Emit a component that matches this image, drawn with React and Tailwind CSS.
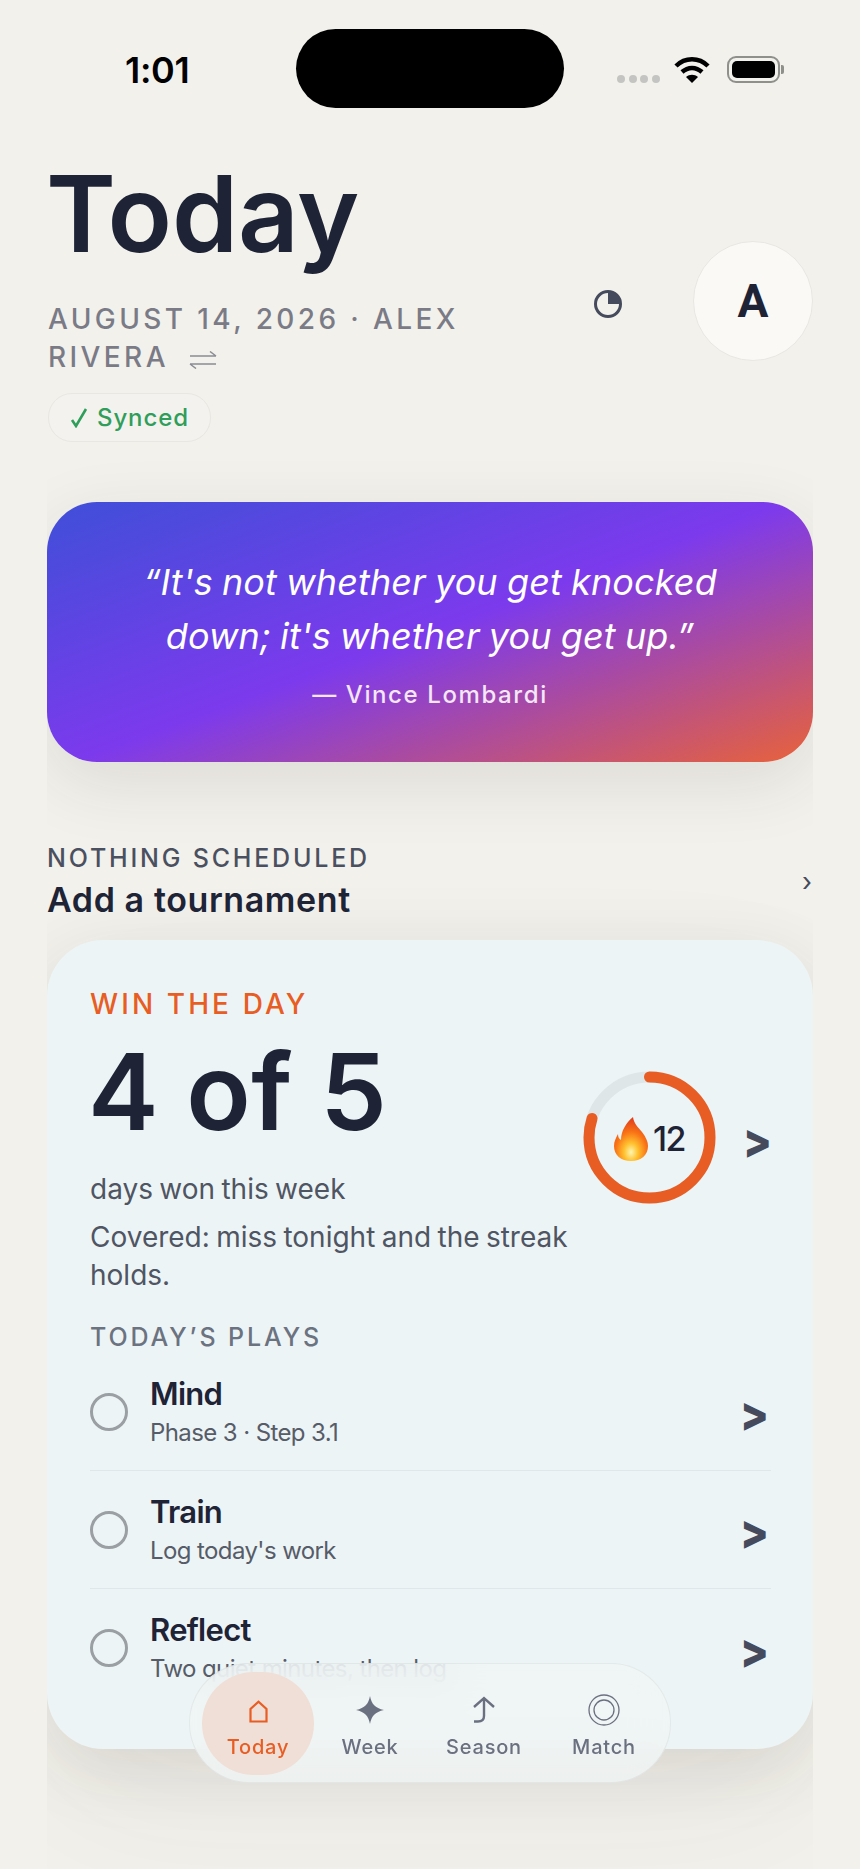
import React from 'react';

const display = "font-['Inter','Liberation_Sans',sans-serif]";

function Chevron() {
    return <span className={`${display} inline-block scale-x-[0.88] text-[48px] leading-[43px] font-extrabold text-[#454a5c]`}>&gt;</span>;
}

function Flame() {
    return (
        <svg width="34" height="44" viewBox="0 0 34 44" className="shrink-0">
            <defs>
                <radialGradient id="flame" cx="50%" cy="80%" r="75%">
                    <stop offset="0%" stopColor="#fff6b0" />
                    <stop offset="28%" stopColor="#ffc02e" />
                    <stop offset="62%" stopColor="#f97316" />
                    <stop offset="100%" stopColor="#e2401c" />
                </radialGradient>
            </defs>
            <path d="M19 0c1 7 5 10 9 15 4 5 6 10 6 14 0 9-7 15-17 15S0 38 0 29c0-5 2-8 4-12 0 3 1 5 3 6 0-9 5-17 12-23z" fill="url(#flame)" />
        </svg>
    );
}

function PlayRow({ title, sub, divider }) {
    return (
        <div className={`flex items-center h-[118px] ${divider ? 'border-b border-[#dfe7ea]' : ''}`}>
            <div className="w-[38px] h-[38px] rounded-full border-[3.5px] border-[#9a9fa3] shrink-0"></div>
            <div className="ml-[22px] flex-1">
                <div className={`${display} text-[31px] leading-[40px] font-semibold tracking-[-0.7px] text-[#1e2336]`}>{title}</div>
                <div className="text-[24px] leading-[34px] mt-[2px] tracking-[-0.6px] text-[#565c68]">{sub}</div>
            </div>
            <div className="mt-[6px]"><Chevron /></div>
        </div>
    );
}

function NavTab({ label, width, active, children }) {
    return (
        <div className={`${width} h-[103px] flex flex-col items-center rounded-full ${active ? 'bg-[#f0dfd6] text-[#e85d23]' : 'text-[#6b7080]'}`}>
            <div className="h-[36px] mt-[20px] flex items-center justify-center">{children}</div>
            <div className={`${display} text-[20px] leading-[26px] mt-[6px] font-medium tracking-[0.8px]`}>{label}</div>
        </div>
    );
}

export default function App() {
    return (
        <div className="relative w-[860px] h-[1869px] overflow-hidden bg-[#f2f1ec] font-['Inter','Liberation_Sans',sans-serif]">

            {/* Status bar */}
            <div className="relative h-[140px]">
                <div className="absolute left-[125px] top-[48px] text-[36px] leading-[44px] font-semibold tracking-[-0.3px] text-black">1:01</div>
                <div className="absolute left-[296px] top-[29px] w-[268px] h-[79px] rounded-[40px] bg-black"></div>
                <div className="absolute left-[617px] top-[75px] flex gap-[3.6px]">
                    {[0, 1, 2, 3].map((i) => <div key={i} className="w-[8px] h-[8px] rounded-full bg-[#c4c4c2]"></div>)}
                </div>
                <svg className="absolute left-[674px] top-[56px]" width="36" height="27" viewBox="0 0 36 27">
                    <path d="M2 10C11 1 25 1 34 10" fill="none" stroke="#000" strokeWidth="4.5" />
                    <path d="M8 16c6-5.500 14-5.500 20 0" fill="none" stroke="#000" strokeWidth="4.5" />
                    <path d="M12 21c3.500-3 8.500-3 12 0l-6 6z" fill="#000" />
                </svg>
                <div className="absolute left-[727px] top-[56px] w-[53px] h-[27px] rounded-[9px] border-[2px] border-[#8f8f8c] p-[3px]">
                    <div className="w-full h-full rounded-[5px] bg-black"></div>
                </div>
                <div className="absolute left-[781px] top-[65px] w-[3px] h-[9px] rounded-r-[2px] bg-[#8f8f8c]"></div>
            </div>

            {/* Header */}
            <div className="flex justify-between pl-[48px] pr-[47px]">
                <div className="w-[480px]">
                    <h1 className={`${display} ml-[-2px] mt-[6px] text-[106px] leading-[136px] font-semibold tracking-[-0.1px] text-[#1e2336]`}>Today</h1>
                    <div className={`${display} mt-[18px] text-[28px] leading-[38px] font-medium tracking-[3.4px] text-[#7a7b86]`}>
                        AUGUST 14, 2026 · ALEX RIVERA
                        <svg className="inline-block ml-[20px] align-[-2px]" width="28" height="18" viewBox="0 0 28 18" fill="none" stroke="#8b8c94" strokeWidth="1.5">
                            <path d="M1 5h26M21 0.500l6 4.500M27 13H1M7 17.500L1 13" />
                        </svg>
                    </div>
                    <div className="mt-[17px] inline-flex items-center h-[49px] px-[21px] rounded-[24px] border border-[#e8e7e2] bg-[#f3f2ee]">
                        <svg width="18" height="20" viewBox="0 0 18 20" fill="none" stroke="#2f9e5a" strokeWidth="2.600" className="mr-[9px]">
                            <path d="M2 12l4 6L16 1" />
                        </svg>
                        <span className={`${display} text-[24px] font-medium tracking-[0.9px] text-[#2f9e5a]`}>Synced</span>
                    </div>
                </div>
                <div className="flex items-center mt-[102px] h-[118px]">
                    <svg width="30" height="30" viewBox="0 0 30 30" className="mr-[70px] mt-[6px]">
                        <circle cx="15" cy="15" r="12.500" fill="none" stroke="#454a5c" strokeWidth="3" />
                        <path d="M15 15V2.500A12.500 12.500 0 0 1 27.500 15z" fill="#454a5c" />
                    </svg>
                    <div className="w-[120px] h-[120px] rounded-full bg-[#faf9f6] border border-[#e8e7e2] flex items-center justify-center">
                        <span className="font-['Roboto',sans-serif] text-[46px] font-bold text-[#1e2336]">A</span>
                    </div>
                </div>
            </div>

            {/* Scrolling content */}
            <div className="absolute left-[47px] right-[47px] top-[448px] bottom-0 overflow-hidden pt-[54px]">
                <div className="h-[260px] rounded-[50px] bg-[linear-gradient(160deg,#3f4fd8_0%,#7c3aed_50%,#e8623a_100%)] shadow-[0_20px_70px_rgba(60,50,30,0.11)] flex flex-col items-center pt-[53px]">
                    <p className="w-[620px] text-center italic text-[36px] leading-[54px] tracking-[0.1px] [word-spacing:-1px] text-white">“It's not whether you get knocked down; it's whether you get up.”</p>
                    <p className={`${display} mt-[15px] text-[24px] leading-[34px] font-medium tracking-[1.6px] text-[#f3e6f5]`}>— Vince Lombardi</p>
                </div>

                <div className="flex items-center justify-between mt-[79px]">
                    <div>
                        <div className={`${display} text-[25px] leading-[34px] font-medium tracking-[2.8px] text-[#4b5060]`}>NOTHING SCHEDULED</div>
                        <div className={`${display} text-[34px] leading-[44px] mt-[3px] font-semibold tracking-[0.6px] text-[#1e2336]`}>Add a tournament</div>
                    </div>
                    <span className="text-[26px] leading-none text-[#454a5c] mr-[1px]">›</span>
                </div>

                <div className="mt-[18px] h-[809px] rounded-[56px] bg-[#edf4f6] shadow-[0_20px_70px_rgba(60,50,30,0.11),0_60px_160px_rgba(60,50,30,0.05)] px-[43px] pt-[45px]">
                    <div className={`${display} text-[28px] leading-[38px] font-medium tracking-[3.1px] text-[#e85d23]`}>WIN THE DAY</div>
                    <div className="flex items-start">
                        <div className="w-[485px] shrink-0">
                            <div className={`${display} ml-[-2px] mt-[8px] text-[106px] leading-[122px] font-semibold tracking-[0.5px] text-[#1e2336]`}>4 of 5</div>
                            <p className="mt-[17px] text-[28px] leading-[38px] tracking-[0px] [word-spacing:-1.5px] text-[#4f5563]">days won this week</p>
                            <p className="mt-[10px] text-[28px] leading-[38px] tracking-[0px] [word-spacing:-1.5px] text-[#4f5563]">Covered: miss tonight and the streak holds.</p>
                        </div>
                        <div className="relative w-[133px] h-[133px] mt-[48px] ml-[8px] shrink-0">
                            <svg width="133" height="133" viewBox="0 0 133 133" className="-rotate-90">
                                <circle cx="66.500" cy="66.500" r="60.500" fill="none" stroke="#dfe6e8" strokeWidth="11" />
                                <circle cx="66.500" cy="66.500" r="60.500" fill="none" stroke="#e85d23" strokeWidth="11" strokeLinecap="round" strokeDasharray="304 380.100" />
                            </svg>
                            <div className="absolute inset-0 flex items-center justify-center gap-[5px] pt-[2px]">
                                <Flame />
                                <span className="text-[34px] leading-none font-medium tracking-[-1.5px] text-[#1e2336]">12</span>
                            </div>
                        </div>
                        <div className="ml-[25px] mt-[96px]"><Chevron /></div>
                    </div>

                    <div className={`${display} mt-[26px] text-[25px] leading-[34px] font-medium tracking-[2.9px] text-[#6b7280]`}>TODAY’S PLAYS</div>
                    <div className="mt-[-1px] mr-[-1px]">
                        <PlayRow title="Mind" sub="Phase 3 · Step 3.1" divider />
                        <PlayRow title="Train" sub="Log today's work" divider />
                        <PlayRow title="Reflect" sub="Two quiet minutes, then log" />
                    </div>
                </div>
            </div>

            {/* Bottom tab bar */}
            <div className="absolute left-[189px] top-[1663px] w-[482px] h-[120px] rounded-[60px] bg-[rgba(240,245,245,0.8)] backdrop-blur-[18px] border border-[rgba(0,0,0,0.05)] flex items-center pl-[12px]">
                <NavTab label="Today" width="w-[112px]" active>
                    <svg width="19" height="23" viewBox="0 0 19 23" fill="none" stroke="currentColor" strokeWidth="2.200" className="mt-[3px]">
                        <path d="M1.500 21.500V9L9.500 1.800 17.500 9v12.500z" />
                    </svg>
                </NavTab>
                <NavTab label="Week" width="w-[112px]">
                    <svg width="28" height="28" viewBox="0 0 28 28" fill="currentColor">
                        <path d="M14 0c1.500 8 5 12 14 14-9 2-12.500 6-14 14-1.500-8-5-12-14-14 9-2 12.500-6 14-14z" />
                    </svg>
                </NavTab>
                <NavTab label="Season" width="w-[116px]">
                    <svg width="22" height="27" viewBox="0 0 22 27" fill="none" stroke="currentColor" strokeWidth="2.400">
                        <path d="M1 11L11 2l10 9M11 2v18c0 4-2 5.500-6 5.500H1" />
                    </svg>
                </NavTab>
                <NavTab label="Match" width="w-[124px]">
                    <svg width="32" height="32" viewBox="0 0 32 32" fill="none" stroke="currentColor" strokeWidth="1.300">
                        <circle cx="16" cy="16" r="15" />
                        <circle cx="16" cy="16" r="10" />
                    </svg>
                </NavTab>
            </div>
        </div>
    );
}
